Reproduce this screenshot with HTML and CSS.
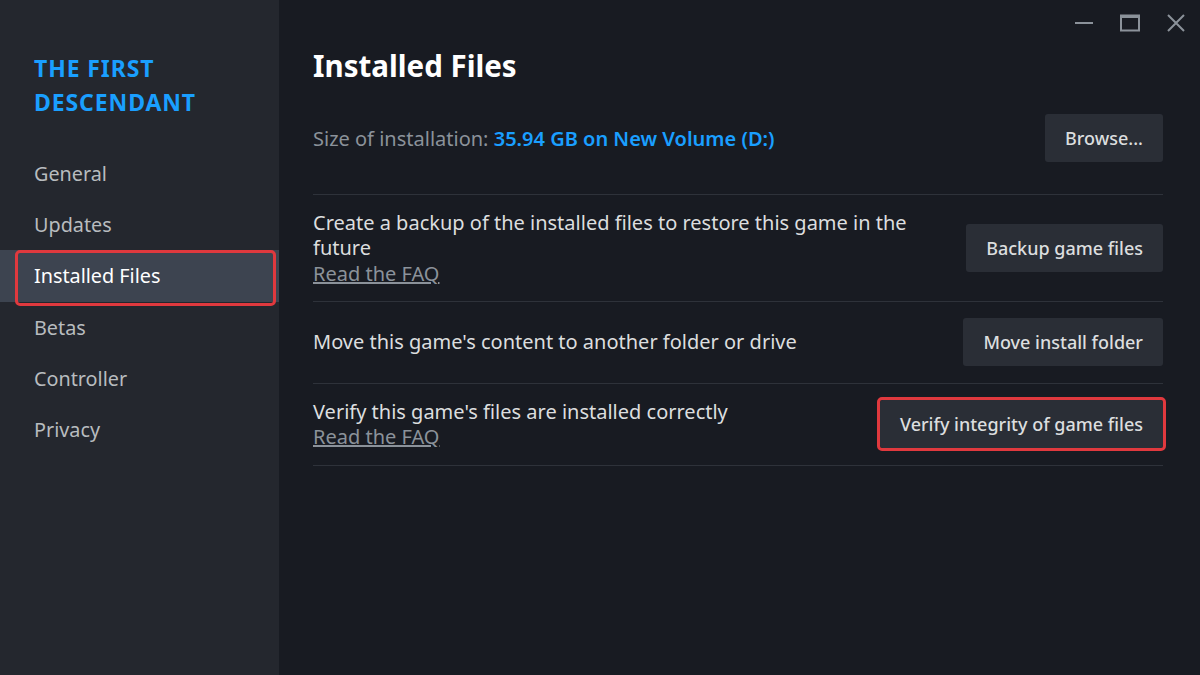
FILE: index.html
```html
<!DOCTYPE html>
<html>
<head>
<meta charset="utf-8">
<link rel="stylesheet" href="styles.css">
</head>
<body>
<div class="app">
  <aside class="sidebar">
    <div class="game-title">THE FIRST<br>DESCENDANT</div>
    <nav class="nav">
      <div class="nav-item">General</div>
      <div class="nav-item">Updates</div>
      <div class="nav-item active">Installed Files</div>
      <div class="nav-item">Betas</div>
      <div class="nav-item">Controller</div>
      <div class="nav-item">Privacy</div>
    </nav>
  </aside>
  <main class="main">
    <div class="titlebar">
      <span class="wc wc-min"><svg width="20" height="20" viewBox="0 0 20 20"><path d="M1 10h18" stroke="#8b929a" stroke-width="2"/></svg></span>
      <span class="wc wc-max"><svg width="20" height="18" viewBox="0 0 20 18"><rect x="1" y="1.5" width="18" height="15" fill="none" stroke="#8b929a" stroke-width="2"/><path d="M1 3h18" stroke="#8b929a" stroke-width="2"/></svg></span>
      <span class="wc wc-close"><svg width="20" height="18" viewBox="0 0 20 18"><path d="M2 1l16 16M18 1L2 17" stroke="#8b929a" stroke-width="2"/></svg></span>
    </div>
    <div class="content">
      <h1 class="heading">Installed Files</h1>
      <div class="size-row">
        <div class="size-text">Size of installation: <span class="size-value">35.94 GB on New Volume (D:)</span></div>
        <button class="btn">Browse...</button>
      </div>
      <div class="row">
        <div class="row-text">
          <div>Create a backup of the installed files to restore this game in the future</div>
          <a class="faq">Read the FAQ</a>
        </div>
        <button class="btn">Backup game files</button>
      </div>
      <div class="row">
        <div class="row-text">
          <div>Move this game's content to another folder or drive</div>
        </div>
        <button class="btn">Move install folder</button>
      </div>
      <div class="row">
        <div class="row-text">
          <div>Verify this game's files are installed correctly</div>
          <a class="faq">Read the FAQ</a>
        </div>
        <button class="btn btn-marked">Verify integrity of game files</button>
      </div>
    </div>
  </main>
</div>
</body>
</html>
```
FILE: styles.css
```css
* { box-sizing: border-box; }
html, body { margin: 0; padding: 0; }
body {
  font-family: "Noto Sans", "Open Sans", sans-serif;
  background: #181b22;
  color: #dcdedf;
}
.app {
  display: flex;
  width: 1200px;
  height: 675px;
}
.sidebar {
  width: 279px;
  flex: none;
  background: #24272e;
  padding-top: 51px;
}
.game-title {
  color: #1a9fff;
  font-weight: 700;
  font-size: 23px;
  line-height: 34px;
  padding-left: 34px;
  letter-spacing: 0.9px;
}
.nav {
  margin-top: 29px;
  display: flex;
  flex-direction: column;
}
.nav-item {
  height: 51.2px;
  line-height: 51.2px;
  padding-left: 34px;
  font-size: 19.8px;
  color: #b8bcbf;
  position: relative;
}
.nav-item.active {
  background: #3d4450;
  color: #ffffff;
}
.nav-item.active::after {
  content: "";
  position: absolute;
  left: 15px;
  right: 3px;
  top: 0px;
  bottom: -4px;
  border: 3px solid #e0393e;
  border-radius: 5px;
}
.main {
  flex: 1;
  display: flex;
  flex-direction: column;
}
.titlebar {
  height: 40px;
  display: flex;
  justify-content: flex-end;
  align-items: center;
  gap: 26px;
  padding-right: 14px;
  padding-top: 6px;
}
.wc { display: flex; align-items: center; }
.content {
  padding: 0 37px 0 34px;
}
.heading {
  margin: 6px 0 0 0;
  font-size: 29.5px;
  line-height: 40px;
  font-weight: 700;
  color: #ffffff;
}
.size-row {
  display: flex;
  justify-content: space-between;
  align-items: center;
  margin-top: 26px;
  padding-bottom: 30px;
  border-bottom: 1px solid #2e323a;
}
.size-text {
  font-size: 20px;
  color: #8b929a;
}
.size-value {
  color: #1a9fff;
  font-weight: 600;
}
.row {
  display: flex;
  justify-content: space-between;
  align-items: center;
  gap: 40px;
  padding: 14.5px 0;
  border-bottom: 1px solid #2e323a;
}
.row-text {
  font-size: 20px;
  line-height: 25.5px;
  color: #dcdedf;
  max-width: 620px;
}
.faq {
  color: #8b929a;
  text-decoration: underline;
  display: block;
}
.btn {
  flex: none;
  height: 48px;
  margin: 2px 0;
  padding: 0 20px;
  border: none;
  border-radius: 3px;
  background: #2a2e36;
  color: #dcdedf;
  font-family: inherit;
  font-size: 18px;
  font-weight: 500;
  position: relative;
}
.btn-marked::after {
  content: "";
  position: absolute;
  left: -3px;
  right: -3px;
  top: -3px;
  bottom: -3px;
  border: 3px solid #e0393e;
  border-radius: 5px;
}
```
